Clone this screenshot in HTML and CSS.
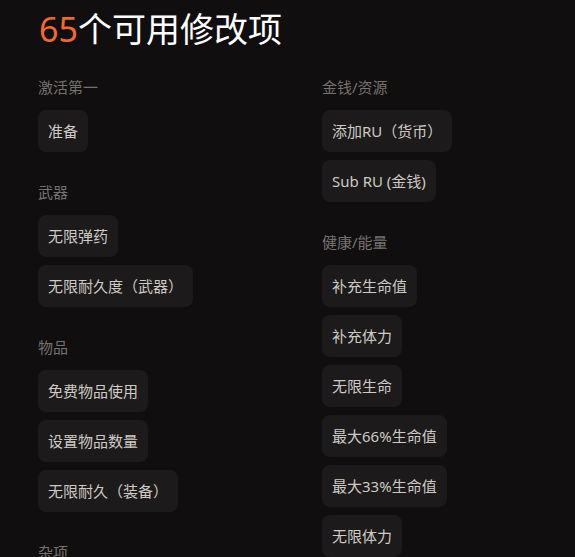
FILE: index.html
```html
<!DOCTYPE html>
<html lang="zh-CN">
<head>
<meta charset="utf-8">
<link rel="stylesheet" href="styles.css">
</head>
<body>
<div class="page">
  <h1 class="title"><span class="count">65</span>个可用修改项</h1>
  <div class="columns">
    <div class="col">
      <section class="group">
        <h2 class="group-title">激活第一</h2>
        <div class="items">
          <span class="item">准备</span>
        </div>
      </section>
      <section class="group">
        <h2 class="group-title">武器</h2>
        <div class="items">
          <span class="item">无限弹药</span>
          <span class="item">无限耐久度（武器）</span>
        </div>
      </section>
      <section class="group">
        <h2 class="group-title">物品</h2>
        <div class="items">
          <span class="item">免费物品使用</span>
          <span class="item">设置物品数量</span>
          <span class="item">无限耐久（装备）</span>
        </div>
      </section>
      <section class="group">
        <h2 class="group-title">杂项</h2>
      </section>
    </div>
    <div class="col">
      <section class="group">
        <h2 class="group-title">金钱/资源</h2>
        <div class="items">
          <span class="item">添加RU（货币）</span>
          <span class="item">Sub RU (金钱)</span>
        </div>
      </section>
      <section class="group">
        <h2 class="group-title">健康/能量</h2>
        <div class="items">
          <span class="item">补充生命值</span>
          <span class="item">补充体力</span>
          <span class="item">无限生命</span>
          <span class="item">最大66%生命值</span>
          <span class="item">最大33%生命值</span>
          <span class="item">无限体力</span>
        </div>
      </section>
    </div>
  </div>
</div>
</body>
</html>
```

FILE: styles.css
```css
html, body {
  margin: 0;
  padding: 0;
  background: #100e0e;
}
body {
  font-family: "Noto Sans", "Noto Sans CJK SC", sans-serif;
  color: #cfcac5;
  overflow: hidden;
  height: 557px;
}
.page {
  padding: 8px 0 0 38px;
}
.title {
  margin: 0 0 27px 1px;
  font-size: 34px;
  line-height: 42px;
  font-weight: 400;
  color: #ffffff;
  letter-spacing: 0;
}
.count {
  color: #f26a2a;
}
.columns {
  display: grid;
  grid-template-columns: 284px 1fr;
}
.col {
  display: flex;
  flex-direction: column;
  gap: 30px;
}
.group-title {
  margin: 0 0 13px 0;
  font-size: 15px;
  line-height: 20px;
  font-weight: 400;
  color: #77726f;
}
.items {
  display: flex;
  flex-direction: column;
  align-items: flex-start;
  gap: 8px;
}
.item {
  display: block;
  background: #1c1a1a;
  border-radius: 8px;
  padding: 0 10px;
  height: 42px;
  line-height: 42px;
  font-size: 15px;
  color: #cfcac5;
  white-space: nowrap;
}
```
